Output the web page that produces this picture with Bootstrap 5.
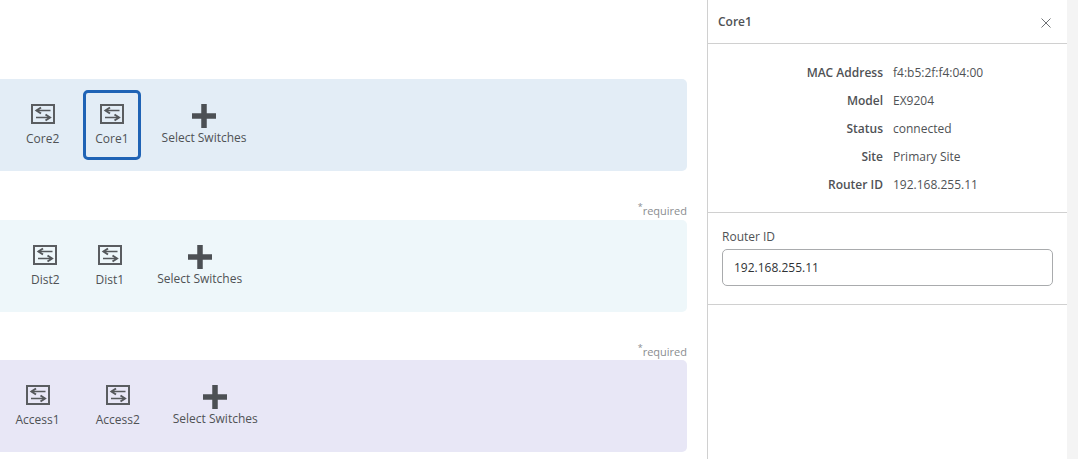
<!DOCTYPE html>
<html lang="en">
<head>
  <meta charset="UTF-8">
  <meta name="viewport" content="width=device-width, initial-scale=1">
  <title>Switch Layers</title>
  <link href="https://cdn.jsdelivr.net/npm/bootstrap@5.3.0/dist/css/bootstrap.min.css" rel="stylesheet">
  <style>
    html, body { height: 100%; }
    body {
      font-family: "Open Sans", "Liberation Sans", sans-serif;
      font-size: 12px;
      color: #4f5255;
      background: #f4f4f4;
      overflow: hidden;
    }
    .page-wrap { width: 1067px; height: 459px; background: #fff; }
    .layers-pane { width: 707px; padding: 79px 20px 0 0; }
    .layer-band { height: 92px; border-radius: 0 5px 5px 0; }
    .band-core { background: #e3edf6; padding-left: 14px; }
    .band-dist { background: #eef7fa; padding-left: 19px; }
    .band-access { background: #e8e7f6; padding-left: 3.5px; }
    .required-note { height: 49px; padding-bottom: 1px; font-size: 11px; color: #8a8d90; }
    .required-note.tight { height: 48px; padding-bottom: 0; }
    .required-note sup { font-size: 9px; top: -.55em; }
    .sw-tile {
      height: 70px;
      padding: 10px 9px 0;
      border: 3px solid transparent;
      border-radius: 5px;
      line-height: 16px;
    }
    .sw-tile.selected { border-color: #1f63b5; }
    .sw-tile svg { display: block; width: 24px; height: 21px; margin-bottom: 7px; }
    .add-tile { padding: 0 9px; line-height: 16px; margin-top: -1px; }
    .add-tile svg { display: block; width: 24px; height: 24px; margin-bottom: 2px; }
    .detail-pane { width: 360px; border-left: 1px solid #d0d0d0; }
    .pane-head { height: 44px; padding: 0 10px; border-bottom: 1px solid #d0d0d0; font-weight: 600; }
    .pane-head svg { width: 10px; height: 10px; margin-right: 6px; margin-top: 2px; }
    .info-block { height: 169px; padding-top: 15px; border-bottom: 1px solid #d0d0d0; }
    .info-row { height: 28px; line-height: 28px; }
    .info-label { width: 175px; text-align: right; font-weight: 600; }
    .info-value { margin-left: 10px; }
    .edit-block { height: 92px; padding: 15px 14px 0; border-bottom: 1px solid #d0d0d0; }
    .edit-block label { display: block; line-height: 17px; margin-bottom: 4px; }
    .edit-block .form-control {
      height: 37px;
      padding: 0 11px;
      font-size: 12px;
      color: #2f3235;
      border-color: #a9abad;
      border-radius: 5px;
      box-shadow: none;
    }
  </style>
</head>
<body>

<svg width="0" height="0" class="position-absolute">
  <symbol id="switch-icon" viewBox="0 0 24 21">
    <rect x="1" y="2" width="22" height="18" fill="none" stroke="#5a5d60" stroke-width="2"/>
    <path d="M5.5 7.5H19.5M5 14.5H18.5" fill="none" stroke="#55585b" stroke-width="1.5"/>
    <path d="M10 4.5L5.5 7.5L10 10.5" fill="none" stroke="#55585b" stroke-width="2"/>
    <path d="M14.5 11.5L19 14.5L14.5 17.5" fill="none" stroke="#55585b" stroke-width="2"/>
  </symbol>
  <symbol id="plus-icon" viewBox="0 0 24 24">
    <path d="M9.25 0H14.75V9.25H24V14.75H14.75V24H9.25V14.75H0V9.25H9.25Z" fill="#4c5054"/>
  </symbol>
</svg>

<div class="page-wrap d-flex">
  <div class="layers-pane">
    <div class="layer-band band-core d-flex align-items-center gap-2">
      <div class="sw-tile text-center me-1"><svg class="mx-auto"><use href="#switch-icon"/></svg>Core2</div>
      <div class="sw-tile selected text-center"><svg class="mx-auto"><use href="#switch-icon"/></svg>Core1</div>
      <div class="add-tile text-center ms-1"><svg class="mx-auto"><use href="#plus-icon"/></svg>Select Switches</div>
    </div>
    <div class="required-note d-flex justify-content-end align-items-end"><span><sup>*</sup>required</span></div>
    <div class="layer-band band-dist d-flex align-items-center gap-2">
      <div class="sw-tile text-center me-1"><svg class="mx-auto"><use href="#switch-icon"/></svg>Dist2</div>
      <div class="sw-tile text-center"><svg class="mx-auto"><use href="#switch-icon"/></svg>Dist1</div>
      <div class="add-tile text-center ms-1"><svg class="mx-auto"><use href="#plus-icon"/></svg>Select Switches</div>
    </div>
    <div class="required-note tight d-flex justify-content-end align-items-end"><span><sup>*</sup>required</span></div>
    <div class="layer-band band-access d-flex align-items-center gap-2">
      <div class="sw-tile text-center me-1"><svg class="mx-auto"><use href="#switch-icon"/></svg>Access1</div>
      <div class="sw-tile text-center"><svg class="mx-auto"><use href="#switch-icon"/></svg>Access2</div>
      <div class="add-tile text-center ms-1"><svg class="mx-auto"><use href="#plus-icon"/></svg>Select Switches</div>
    </div>
  </div>

  <div class="detail-pane">
    <div class="pane-head d-flex justify-content-between align-items-center">
      <span>Core1</span>
      <svg viewBox="0 0 10 10"><path d="M.5 .5L9.5 9.5M9.5 .5L.5 9.5" stroke="#6f7275" stroke-width="1" fill="none"/></svg>
    </div>
    <div class="info-block">
      <div class="info-row d-flex"><div class="info-label">MAC Address</div><div class="info-value">f4:b5:2f:f4:04:00</div></div>
      <div class="info-row d-flex"><div class="info-label">Model</div><div class="info-value">EX9204</div></div>
      <div class="info-row d-flex"><div class="info-label">Status</div><div class="info-value">connected</div></div>
      <div class="info-row d-flex"><div class="info-label">Site</div><div class="info-value">Primary Site</div></div>
      <div class="info-row d-flex"><div class="info-label">Router ID</div><div class="info-value">192.168.255.11</div></div>
    </div>
    <div class="edit-block">
      <label for="routerId">Router ID</label>
      <input id="routerId" type="text" class="form-control" value="192.168.255.11">
    </div>
  </div>
</div>

<script src="https://cdn.jsdelivr.net/npm/bootstrap@5.3.0/dist/js/bootstrap.bundle.min.js"></script>
</body>
</html>
